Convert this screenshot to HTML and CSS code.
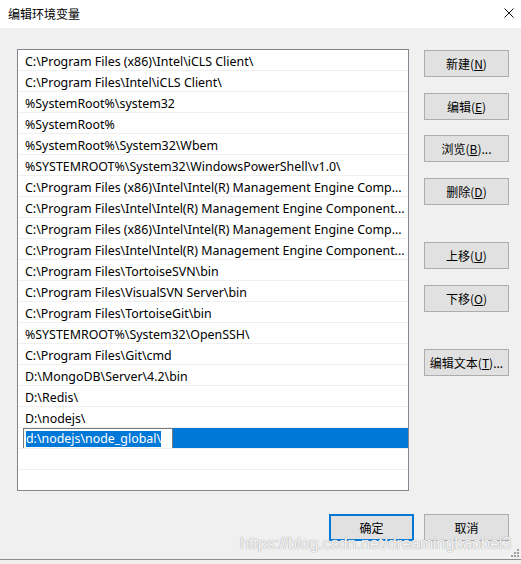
FILE: index.html
```html
<!DOCTYPE html>
<html lang="zh-CN">
<head>
<meta charset="utf-8">
<title>编辑环境变量</title>
<link rel="stylesheet" href="styles.css">
</head>
<body>
<div class="dialog">
  <header class="titlebar">
    <span class="title">编辑环境变量</span>
    <svg class="close" width="10" height="10" viewBox="0 0 10 10"><path d="M0.5 0.5 L9.5 9.5 M9.5 0.5 L0.5 9.5" stroke="#111" stroke-width="1" fill="none"/></svg>
  </header>
  <main class="content">
    <div class="main-row">
      <div class="listbox">
        <div class="row">C:\Program Files (x86)\Intel\iCLS Client\</div>
        <div class="row">C:\Program Files\Intel\iCLS Client\</div>
        <div class="row">%SystemRoot%\system32</div>
        <div class="row">%SystemRoot%</div>
        <div class="row">%SystemRoot%\System32\Wbem</div>
        <div class="row">%SYSTEMROOT%\System32\WindowsPowerShell\v1.0\</div>
        <div class="row">C:\Program Files (x86)\Intel\Intel(R) Management Engine Comp...</div>
        <div class="row">C:\Program Files\Intel\Intel(R) Management Engine Component...</div>
        <div class="row">C:\Program Files (x86)\Intel\Intel(R) Management Engine Comp...</div>
        <div class="row">C:\Program Files\Intel\Intel(R) Management Engine Component...</div>
        <div class="row">C:\Program Files\TortoiseSVN\bin</div>
        <div class="row">C:\Program Files\VisualSVN Server\bin</div>
        <div class="row">C:\Program Files\TortoiseGit\bin</div>
        <div class="row">%SYSTEMROOT%\System32\OpenSSH\</div>
        <div class="row">C:\Program Files\Git\cmd</div>
        <div class="row">D:\MongoDB\Server\4.2\bin</div>
        <div class="row">D:\Redis\</div>
        <div class="row">D:\nodejs\</div>
        <div class="row row-editing">
          <div class="editbox"><span class="sel">d:\nodejs\node_global\</span></div>
          <div class="row-fill"></div>
        </div>
        <div class="row"></div>
      </div>
      <div class="side-buttons">
        <button class="btn">新建(<u>N</u>)</button>
        <button class="btn m15">编辑(<u>E</u>)</button>
        <button class="btn m16">浏览(<u>B</u>)...</button>
        <button class="btn m15">删除(<u>D</u>)</button>
        <button class="btn m37">上移(<u>U</u>)</button>
        <button class="btn m15">下移(<u>O</u>)</button>
        <button class="btn m37">编辑文本(<u>T</u>)...</button>
      </div>
    </div>
    <div class="footer">
      <button class="btn btn-default">确定</button>
      <button class="btn">取消</button>
    </div>
  </main>
  <div class="bottom-edge"></div>
  <div class="watermark">https://blog.csdn.net/dreamingbaobei3</div>
  <svg class="grip" width="8" height="8" viewBox="0 0 8 8">
    <rect x="6" y="0" width="2" height="2" fill="#a0a0a0"/>
    <rect x="3" y="3" width="2" height="2" fill="#a0a0a0"/>
    <rect x="6" y="3" width="2" height="2" fill="#a0a0a0"/>
    <rect x="0" y="6" width="2" height="2" fill="#a0a0a0"/>
    <rect x="3" y="6" width="2" height="2" fill="#a0a0a0"/>
    <rect x="6" y="6" width="2" height="2" fill="#a0a0a0"/>
  </svg>
</div>
</body>
</html>
```
FILE: styles.css
```css
* { box-sizing: border-box; }
html, body { margin: 0; padding: 0; }
body {
  width: 521px;
  height: 564px;
  overflow: hidden;
  background: #f0f0f0;
  font-family: "Noto Sans", "Noto Sans CJK SC", sans-serif;
  font-size: 12px;
  color: #000;
}
.dialog {
  position: relative;
  width: 521px;
  height: 564px;
  display: flex;
  flex-direction: column;
}
.titlebar {
  height: 28px;
  background: #fff;
  display: flex;
  align-items: center;
  justify-content: space-between;
  padding: 0 7px 2px 8px;
  flex: none;
}
.title {
  font-family: "Noto Sans CJK SC", sans-serif;
  font-size: 12px;
  color: #000;
}
.close { display: block; }
.content {
  flex: none;
  padding: 21px 12px 0 17px;
  height: 531px;
  display: flex;
  flex-direction: column;
}
.main-row {
  display: flex;
  gap: 15px;
}
.listbox {
  width: 392px;
  height: 442px;
  border: 1px solid #828790;
  background: #fff;
  overflow: hidden;
  font-size: 12.4px;
}
.row {
  height: 21px;
  line-height: 19px;
  padding-top: 2px;
  border-bottom: 1px solid #f0f0f0;
  padding-left: 7px;
  white-space: nowrap;
  overflow: hidden;
}
.row-editing {
  display: flex;
  padding: 0 0 0 5px;
  align-items: flex-start;
}
.editbox {
  height: 21px;
  border: 1px solid #7a7a7a;
  background: #fff;
  padding: 2px 11px 0 2px;
  line-height: 15px;
  flex: none;
}
.sel {
  display: inline-block;
  background: #0078d7;
  color: #fff;
  height: 16px;
  line-height: 16px;
}
.row-fill {
  flex: 1;
  background: #0078d7;
  height: 20px;
}
.side-buttons {
  display: flex;
  flex-direction: column;
  padding-top: 1px;
}
.btn {
  width: 85px;
  height: 27px;
  background: #e1e1e1;
  border: 1px solid #adadad;
  font-family: "Noto Sans CJK SC", sans-serif;
  font-size: 12px;
  color: #000;
  padding: 0;
  margin: 0;
  line-height: 25px;
  text-align: center;
}
.btn u { text-decoration: underline; text-underline-offset: 1px; }
.m15 { margin-top: 16px; }
.m16 { margin-top: 15px; }
.m37 { margin-top: 37px; }
.footer {
  display: flex;
  justify-content: flex-end;
  gap: 10px;
  margin-top: 23px;
}
.btn-default {
  border: 2px solid #0078d7;
  line-height: 23px;
}
.bottom-edge {
  position: absolute;
  left: 0;
  right: 0;
  top: 559px;
  height: 5px;
  border-top: 1px solid #8c8c8c;
  background: #f0f0f0;
}
.watermark {
  position: absolute;
  left: 240px;
  top: 535px;
  font-family: "Liberation Sans", Arial, sans-serif;
  font-size: 16px;
  color: rgba(255, 255, 255, 0.9);
  text-shadow: 0 0 1px #a8a8a8, 0 0 1px #a8a8a8;
  white-space: nowrap;
}
.grip {
  position: absolute;
  left: 511px;
  top: 549px;
}
```
